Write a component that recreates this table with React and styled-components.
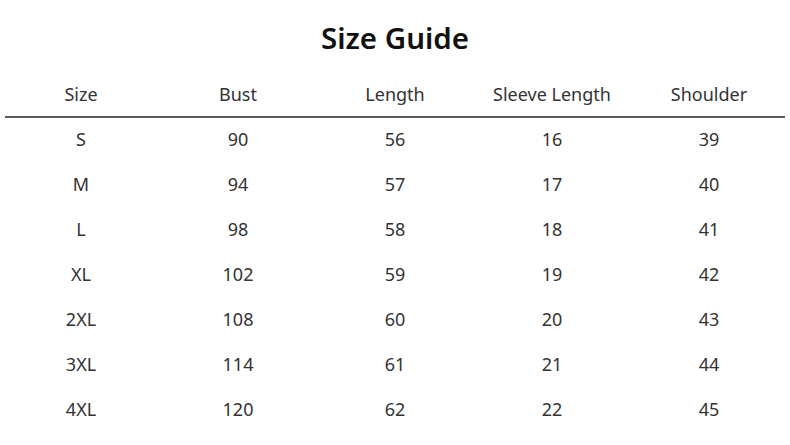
import React from 'react';
import styled, { createGlobalStyle } from 'styled-components';

const headers = ['Size', 'Bust', 'Length', 'Sleeve Length', 'Shoulder'];

const rows = [
    ['S', 90, 56, 16, 39],
    ['M', 94, 57, 17, 40],
    ['L', 98, 58, 18, 41],
    ['XL', 102, 59, 19, 42],
    ['2XL', 108, 60, 20, 43],
    ['3XL', 114, 61, 21, 44],
    ['4XL', 120, 62, 22, 45],
];

const App = () => {
    return (
        <>
            <GlobalStyle />
            <Page>
                <Title>Size Guide</Title>

                <HeaderRow>
                    {headers.map((h) => (
                        <Cell key={h}>{h}</Cell>
                    ))}
                </HeaderRow>
                <Divider />

                {rows.map((row) => (
                    <Row key={row[0]}>
                        {row.map((value, idx) => (
                            <Cell key={idx}>{value}</Cell>
                        ))}
                    </Row>
                ))}
            </Page>
        </>
    );
};

/////* styled components */////

const GlobalStyle = createGlobalStyle`
    body {
        margin: 0;
        background: #fff;
        font-family: "Noto Sans", "Open Sans", sans-serif;
        color: #333;
    }
`;

const Page = styled.div`
    width: 790px;
    height: 445px;
    overflow: hidden;
`;

const Title = styled.h1`
    margin: 0;
    padding-top: 20px;
    height: 52px;
    line-height: 36px;
    text-align: center;
    font-size: 29.5px;
    font-weight: 600;
    color: #111;
`;

const HeaderRow = styled.div`
    display: grid;
    grid-template-columns: repeat(5, 157px);
    width: 785px;
    margin: 0 auto;
    height: 44px;
    align-items: center;
`;

const Divider = styled.div`
    height: 2px;
    margin: 0 5px;
    background: #5a5a5a;
`;

const Row = styled(HeaderRow)`
    height: 45px;
    align-items: start;
    padding-top: 9px;
    box-sizing: border-box;
`;

const Cell = styled.div`
    text-align: center;
    font-size: 18px;
    font-weight: 400;
    line-height: 24px;
    color: #333;
`;

export default App;
